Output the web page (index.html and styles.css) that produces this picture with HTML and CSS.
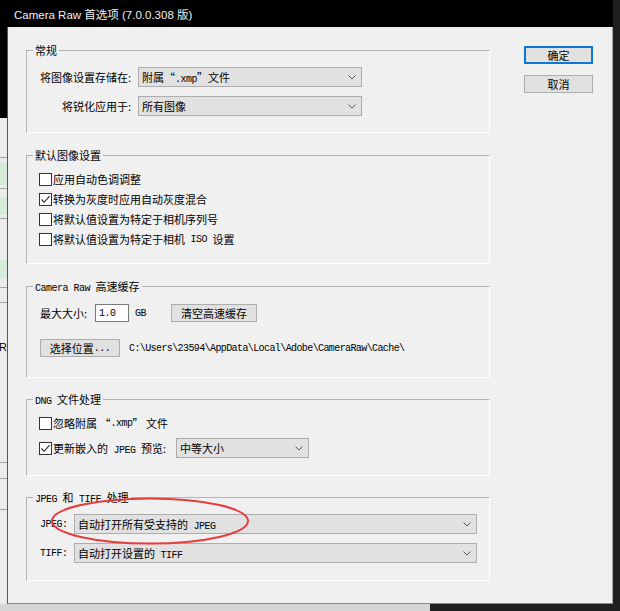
FILE: index.html
```html
<!DOCTYPE html>
<html lang="zh-CN">
<head>
<meta charset="utf-8">
<title>Camera Raw 首选项</title>
<link rel="stylesheet" href="styles.css">
</head>
<body>
<div class="screen">
  <div class="main">
    <div class="titlebar">Camera Raw 首选项 (7.0.0.308 版)</div>
    <div class="middle">
      <div class="lstrip">
        <div class="sg black b91"></div>
        <div class="sg b39"></div>
        <div class="sl"></div>
        <div class="sg b5"></div>
        <div class="sg green b22"></div>
        <div class="sg b3"></div>
        <div class="sl"></div>
        <div class="sg b8"></div>
        <div class="sg green b18"></div>
        <div class="sg b3"></div>
        <div class="sl"></div>
        <div class="sg b41"></div>
        <div class="sg green b18"></div>
        <div class="sg b9"></div>
        <div class="sl"></div>
        <div class="sg b14"></div>
        <div class="sl"></div>
        <div class="sg b159 rtext"><span>R</span></div>
        <div class="sl"></div>
        <div class="sg b15"></div>
        <div class="sl"></div>
        <div class="sg b30"></div>
        <div class="sl"></div>
        <div class="sg rest"></div>
      </div>
      <div class="dialog">
        <div class="groups">
          <fieldset class="group g1">
            <legend>常规</legend>
            <div class="form-grid">
              <span class="flabel">将图像设置存储在:</span>
              <div class="select"><span>附属“<span class="m">.xmp</span>”文件</span><svg class="chev" width="8" height="5" viewBox="0 0 8 5"><polyline points="0.5,0.5 4,4 7.5,0.5" fill="none" stroke="#5a5a5a" stroke-width="1"/></svg></div>
              <span class="flabel">将锐化应用于:</span>
              <div class="select"><span>所有图像</span><svg class="chev" width="8" height="5" viewBox="0 0 8 5"><polyline points="0.5,0.5 4,4 7.5,0.5" fill="none" stroke="#5a5a5a" stroke-width="1"/></svg></div>
            </div>
          </fieldset>

          <fieldset class="group g2">
            <legend>默认图像设置</legend>
            <div class="checks">
              <div class="crow"><span class="cb"></span>应用自动色调调整</div>
              <div class="crow"><span class="cb"><svg width="11" height="11" viewBox="0 0 11 11"><polyline points="1.5,5.5 4.2,8.3 9.5,2.2" fill="none" stroke="#222" stroke-width="1.1"/></svg></span>转换为灰度时应用自动灰度混合</div>
              <div class="crow"><span class="cb"></span>将默认值设置为特定于相机序列号</div>
              <div class="crow"><span class="cb"></span>将默认值设置为特定于相机<span class="m"> ISO </span>设置</div>
            </div>
          </fieldset>

          <fieldset class="group g3">
            <legend><span class="m">Camera Raw </span>高速缓存</legend>
            <div class="cache">
              <div class="cache-row">
                <span class="size-label">最大大小:</span>
                <span class="input"><span class="m">1.0</span></span>
                <span class="m gb">GB</span>
                <span class="btn btn-clear">清空高速缓存</span>
              </div>
              <div class="cache-row r2">
                <span class="btn btn-loc">选择位置<span class="m">...</span></span>
                <span class="m path">C:\Users\23594\AppData\Local\Adobe\CameraRaw\Cache\</span>
              </div>
            </div>
          </fieldset>

          <fieldset class="group g4">
            <legend><span class="m">DNG </span>文件处理</legend>
            <div class="dng">
              <div class="crow"><span class="cb"></span>忽略附属 “<span class="m">.xmp</span>” 文件</div>
              <div class="crow r2"><span class="cb"><svg width="11" height="11" viewBox="0 0 11 11"><polyline points="1.5,5.5 4.2,8.3 9.5,2.2" fill="none" stroke="#222" stroke-width="1.1"/></svg></span><span class="dng-label">更新嵌入的<span class="m"> JPEG </span>预览:</span><div class="select sel-dng"><span>中等大小</span><svg class="chev" width="8" height="5" viewBox="0 0 8 5"><polyline points="0.5,0.5 4,4 7.5,0.5" fill="none" stroke="#5a5a5a" stroke-width="1"/></svg></div></div>
            </div>
          </fieldset>

          <fieldset class="group g5">
            <legend><span class="m">JPEG </span>和<span class="m"> TIFF </span>处理</legend>
            <div class="jt-grid">
              <span class="m jlabel">JPEG:</span>
              <div class="select"><span>自动打开所有受支持的<span class="m"> JPEG</span></span><svg class="chev" width="8" height="5" viewBox="0 0 8 5"><polyline points="0.5,0.5 4,4 7.5,0.5" fill="none" stroke="#5a5a5a" stroke-width="1"/></svg></div>
              <span class="m jlabel">TIFF:</span>
              <div class="select"><span>自动打开设置的<span class="m"> TIFF</span></span><svg class="chev" width="8" height="5" viewBox="0 0 8 5"><polyline points="0.5,0.5 4,4 7.5,0.5" fill="none" stroke="#5a5a5a" stroke-width="1"/></svg></div>
            </div>
          </fieldset>
        </div>
        <div class="buttons">
          <span class="btn btn-ok">确定</span>
          <span class="btn btn-cancel">取消</span>
        </div>
      </div>
    </div>
    <div class="bottom"><div class="bl"></div><div class="br"></div></div>
  </div>
  <div class="rstrip"></div>
  <svg class="mark" width="620" height="611" viewBox="0 0 620 611"><ellipse cx="150" cy="521" rx="98" ry="22.5" fill="none" stroke="#e63c3c" stroke-width="2"/></svg>
</div>
</body>
</html>
```
FILE: styles.css
```css
* { box-sizing: border-box; }
html, body { margin: 0; padding: 0; }
body {
  width: 620px;
  height: 611px;
  overflow: hidden;
  background: #1f1f1f;
  font-family: "Noto Sans CJK SC", "Noto Sans", sans-serif;
  font-size: 11px;
  color: #000;
}
.screen { position: relative; display: flex; width: 620px; height: 611px; }
.main { width: 613px; display: flex; flex-direction: column; }
.rstrip { width: 7px; background: #1f1f1f; }
.mark { position: absolute; left: 0; top: 0; pointer-events: none; }

.titlebar {
  height: 27px;
  background: #000;
  color: #f0f0f0;
  font-family: "Liberation Sans", "Noto Sans CJK SC", sans-serif;
  font-size: 11.5px;
  padding-left: 14px;
  display: flex;
  align-items: center;
}
.middle { display: flex; height: 577px; }

/* background application strip on the left */
.lstrip { width: 7px; display: flex; flex-direction: column; background: #ececec; }
.sg { background: #ececec; flex: none; }
.sg.black { background: #000; }
.sg.green { background: #d6ecd9; }
.sl { height: 1px; background: #a5a5a5; flex: none; }
.b3 { height: 3px; } .b5 { height: 5px; } .b8 { height: 8px; } .b9 { height: 9px; }
.b14 { height: 14px; } .b15 { height: 15px; } .b18 { height: 18px; } .b22 { height: 22px; }
.b30 { height: 30px; } .b39 { height: 39px; } .b41 { height: 41px; } .b91 { height: 91px; }
.b159 { height: 159px; }
.sg.rest { flex: 1; }
.rtext { padding-top: 38px; font-family: "Liberation Sans", sans-serif; font-size: 11px; line-height: 12px; overflow: hidden; }
.rtext span { display: block; margin-left: -1px; }

.bottom { height: 7px; display: flex; }
.bottom .bl { width: 430px; background: #d5d5d5; }
.bottom .br { flex: 1; background: #1f1f1f; }

.dialog {
  width: 606px;
  background: #f0f0f0;
  border-left: 1px solid #555;
  border-right: 1px solid #a5a5a5;
  border-bottom: 1px solid #8a8a8a;
  display: flex;
  padding: 16px 19px 0 18px;
}
.groups { width: 464px; display: flex; flex-direction: column; }
.buttons { width: 69px; margin-left: 34px; padding-top: 3px; display: flex; flex-direction: column; }

.m {
  font-family: "Liberation Mono", monospace;
  font-size: 10px;
  letter-spacing: -0.5px;
  white-space: pre;
}

.group {
  margin: 0;
  padding: 0;
  min-width: 0;
  border: 1px solid;
  border-color: #b4b4b4 #ffffff #ffffff #b4b4b4;
}
.group legend {
  font-size: 11px;
  line-height: 15px;
  height: 15px;
  padding: 0 2px;
  margin-left: 6px;
  white-space: nowrap;
}
.g2, .g3 { margin-top: 15px; }
.g4, .g5 { margin-top: 14px; }

.select {
  height: 20px;
  background: #e1e1e1;
  border: 1px solid #adadad;
  display: flex;
  align-items: center;
  justify-content: space-between;
  padding: 0 5px 0 3px;
  white-space: nowrap;
}
.select .chev { flex: none; }

.form-grid {
  padding: 9px 0 16px 13px;
  display: grid;
  grid-template-columns: 98px 224px;
  row-gap: 9px;
  align-items: center;
}
.flabel { text-align: right; padding-right: 7px; white-space: nowrap; }

.checks { padding: 6px 0 14px 12px; }
.crow { height: 20px; display: flex; align-items: center; white-space: nowrap; }
.cb {
  width: 13px;
  height: 13px;
  border: 1px solid #333;
  background: #fff;
  margin-right: 1px;
  flex: none;
  display: flex;
  align-items: center;
  justify-content: center;
}

.cache { padding: 10px 0 20px 13px; }
.cache-row { height: 18px; display: flex; align-items: center; white-space: nowrap; }
.cache-row.r2 { margin-top: 17px; }
.size-label { width: 55px; }
.input {
  width: 34px;
  height: 18px;
  background: #fff;
  border: 1px solid #7a7a7a;
  padding-left: 3px;
  display: flex;
  align-items: center;
}
.gb { width: 42px; padding-left: 6px; }
.btn {
  height: 18px;
  background: #e1e1e1;
  border: 1px solid #adadad;
  display: flex;
  align-items: center;
  justify-content: center;
  white-space: nowrap;
}
.btn-clear { width: 86px; }
.btn-loc { width: 80px; }
.path { margin-left: 9px; letter-spacing: -0.6px; }

.dng { padding: 6px 0 17px 12px; }
.dng .r2 { margin-top: 5px; }
.dng-label { width: 123px; }
.sel-dng { width: 133px; }

.jt-grid {
  padding: 9px 0 17px 13px;
  display: grid;
  grid-template-columns: 34px 403px;
  row-gap: 9px;
  align-items: center;
}

.btn-ok { border: 2px solid #0a78d6; }
.btn-cancel { margin-top: 11px; }
```
